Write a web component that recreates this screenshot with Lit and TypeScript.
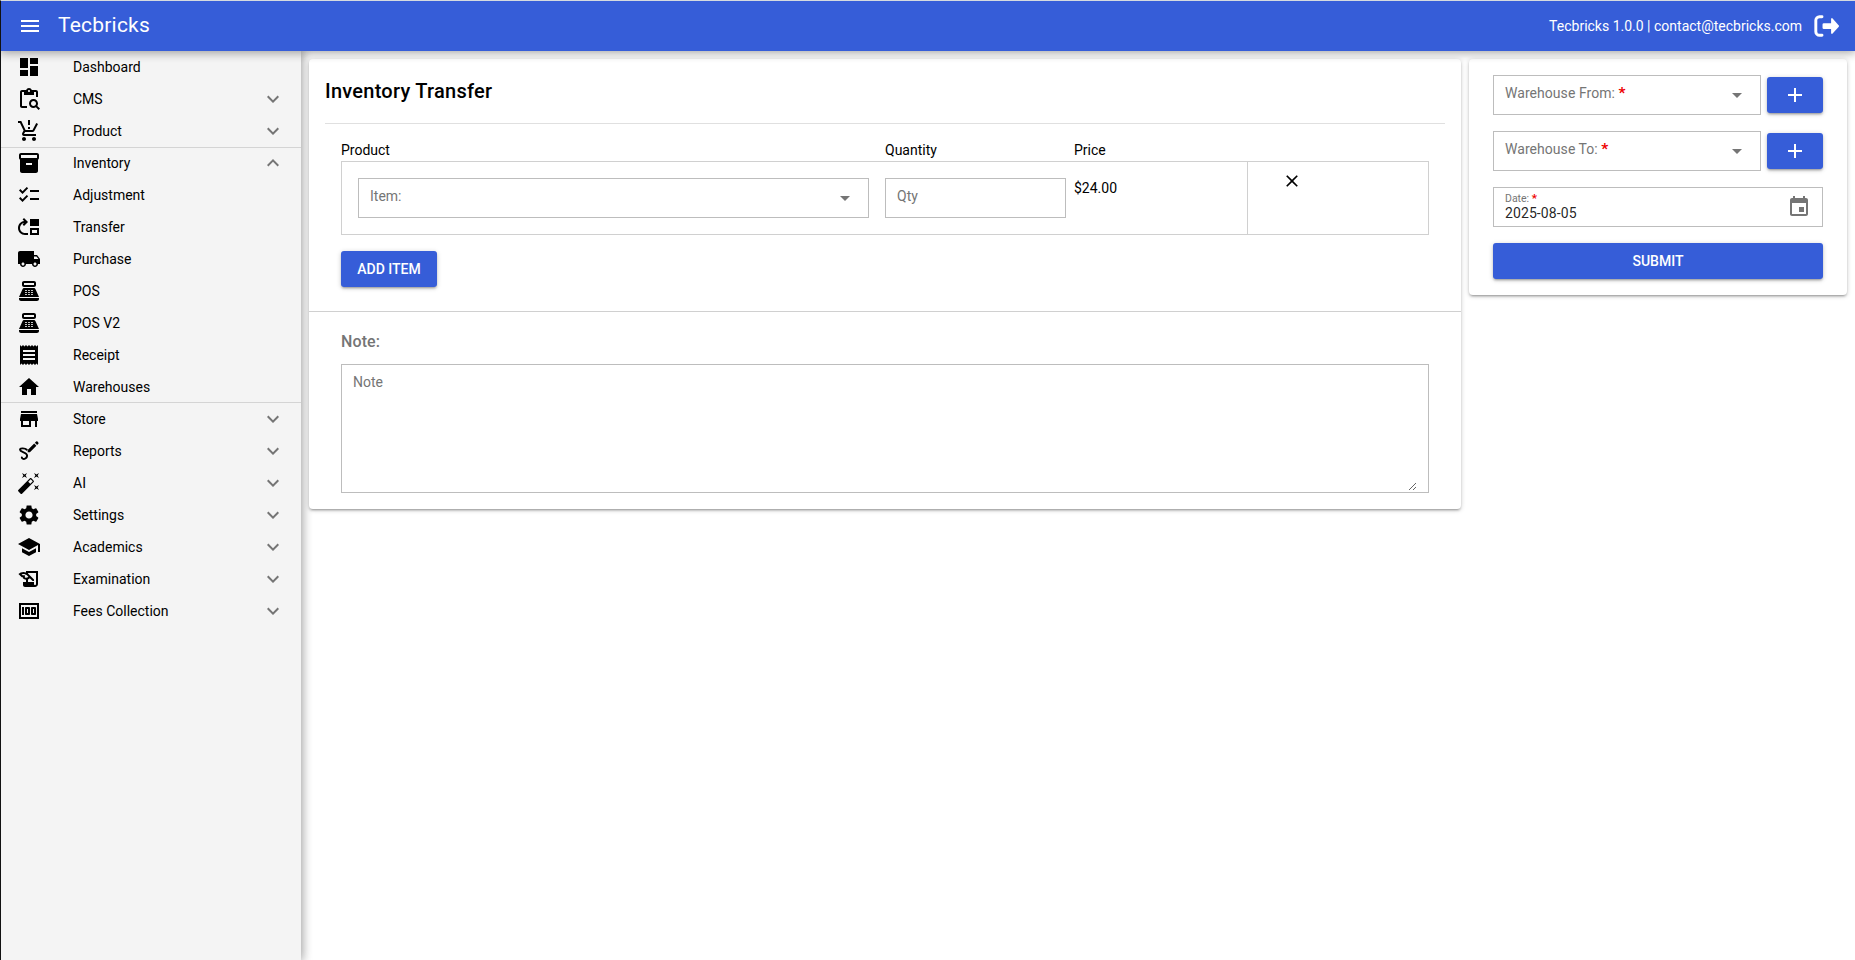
import { LitElement, html, css, svg, nothing } from "lit";
import { customElement, property } from "lit/decorators.js";

const ICONS: Record<string, string> = {
  dashboard: "M3 13h8V3H3v10zm0 8h8v-6H3v6zm10 0h8V11h-8v10zm0-18v6h8V3h-8z",
  cms: "M5 5h2v3h10V5h2v5h2V5c0-1.1-.9-2-2-2h-4.18C14.4 1.84 13.3 1 12 1s-2.4.84-2.82 2H5c-1.1 0-2 .9-2 2v14c0 1.1.9 2 2 2h5v-2H5V5zm7-2c.55 0 1 .45 1 1s-.45 1-1 1-1-.45-1-1 .45-1 1-1zM20.3 18.9c.4-.7.7-1.5.7-2.4 0-2.5-2-4.5-4.5-4.5S12 14 12 16.5s2 4.5 4.5 4.5c.9 0 1.7-.3 2.4-.7l2.7 2.7 1.4-1.4-2.7-2.7zm-3.8.1c-1.4 0-2.5-1.1-2.5-2.5s1.1-2.5 2.5-2.5 2.5 1.1 2.5 2.5-1.1 2.5-2.5 2.5z",
  cart: "M13 10h-2V8h2v2zm0-4h-2V1h2v5zM7 18c-1.1 0-1.99.9-1.99 2S5.9 22 7 22s2-.9 2-2-.9-2-2-2zm10 0c-1.1 0-1.99.9-1.99 2s.89 2 1.99 2 2-.9 2-2-.9-2-2-2zm-8.9-5h7.45c.75 0 1.41-.41 1.75-1.03L21 4.96 19.25 4l-3.7 7H8.53L4.27 2H1v2h2l3.6 7.59-1.35 2.44C4.52 15.37 5.48 17 7 17h12v-2H7l1.1-2z",
  inventory: "M20 2H4c-1 0-2 .9-2 2v3.01c0 .72.43 1.34 1 1.69V20c0 1.1 1.1 2 2 2h14c.9 0 2-.9 2-2V8.7c.57-.35 1-.97 1-1.69V4c0-1.1-1-2-2-2zm-5 12H9v-2h6v2zm5-7H4V4h16v3z",
  checklist: "M22 7h-9v2h9V7zm0 8h-9v2h9v-2zM5.54 11 2 7.46l1.41-1.41 2.12 2.12 4.24-4.24 1.41 1.41L5.54 11zm0 8L2 15.46l1.41-1.41 2.12 2.12 4.24-4.24 1.41 1.41L5.54 19z",
  transfer: "M3 13c0-2.45 1.76-4.47 4.08-4.91L5.59 9.59 7 11l4-4.01L7 3 5.59 4.41l1.58 1.58v.06C3.7 6.46 1 9.42 1 13c0 3.87 3.13 7 7 7h3v-2H8c-2.76 0-5-2.24-5-5zM13 13v7h9v-7h-9zm7 5h-5v-3h5v3zM13 4h9v7h-9z",
  truck: "M20 8h-3V4H3c-1.1 0-2 .9-2 2v11h2c0 1.66 1.34 3 3 3s3-1.34 3-3h6c0 1.66 1.34 3 3 3s3-1.34 3-3h2v-5l-3-4zM6 18.5c-.83 0-1.5-.67-1.5-1.5s.67-1.5 1.5-1.5 1.5.67 1.5 1.5-.67 1.5-1.5 1.5zm13.5-9l1.96 2.5H17V9.5h2.5zm-1.5 9c-.83 0-1.5-.67-1.5-1.5s.67-1.5 1.5-1.5 1.5.67 1.5 1.5-.67 1.5-1.5 1.5z",
  pos: "M17 2H7c-1.1 0-2 .9-2 2v2c0 1.1.9 2 2 2h10c1.1 0 2-.9 2-2V4c0-1.1-.9-2-2-2zm0 4H7V4h10v2zm3 16H4c-1.1 0-2-.9-2-2v-1h20v1c0 1.1-.9 2-2 2zm-1.47-11.81C18.21 9.47 17.49 9 16.7 9H7.3c-.79 0-1.51.47-1.83 1.19L2 18h20l-3.47-7.81zM9.5 16h-1c-.28 0-.5-.22-.5-.5s.22-.5.5-.5h1c.28 0 .5.22.5.5s-.22.5-.5.5zm0-2h-1c-.28 0-.5-.22-.5-.5s.22-.5.5-.5h1c.28 0 .5.22.5.5s-.22.5-.5.5zm0-2h-1c-.28 0-.5-.22-.5-.5s.22-.5.5-.5h1c.28 0 .5.22.5.5s-.22.5-.5.5zm3 4h-1c-.28 0-.5-.22-.5-.5s.22-.5.5-.5h1c.28 0 .5.22.5.5s-.22.5-.5.5zm0-2h-1c-.28 0-.5-.22-.5-.5s.22-.5.5-.5h1c.28 0 .5.22.5.5s-.22.5-.5.5zm0-2h-1c-.28 0-.5-.22-.5-.5s.22-.5.5-.5h1c.28 0 .5.22.5.5s-.22.5-.5.5zm3 4h-1c-.28 0-.5-.22-.5-.5s.22-.5.5-.5h1c.28 0 .5.22.5.5s-.22.5-.5.5zm0-2h-1c-.28 0-.5-.22-.5-.5s.22-.5.5-.5h1c.28 0 .5.22.5.5s-.22.5-.5.5zm0-2h-1c-.28 0-.5-.22-.5-.5s.22-.5.5-.5h1c.28 0 .5.22.5.5s-.22.5-.5.5z",
  receipt: "M18 17H6v-2h12v2zm0-4H6v-2h12v2zm0-4H6V7h12v2zM3 22l1.5-1.5L6 22l1.5-1.5L9 22l1.5-1.5L12 22l1.5-1.5L15 22l1.5-1.5L18 22l1.5-1.5L21 22V2l-1.5 1.5L18 2l-1.5 1.5L15 2l-1.5 1.5L12 2l-1.5 1.5L9 2 7.5 3.5 6 2 4.5 3.5 3 2v20z",
  home: "M10 20v-6h4v6h5v-8h3L12 3 2 12h3v8z",
  store: "M20 4H4v2h16V4zm1 10v-2l-1-5H4l-1 5v2h1v6h10v-6h4v6h2v-6h1zm-9 4H6v-4h6v4z",
  reports: "M20.500 2.600a1 1 0 0 0-1.400 0l-1.200 1.200 2.200 2.200 1.200-1.200a1 1 0 0 0 0-1.400zM17.200 4.500 10.700 11V13.200h2.200l6.500-6.500z",
  magic: "M7.5 5.6L10 7 8.6 4.5 10 2 7.5 3.4 5 2l1.4 2.5L5 7zm12 9.8L17 14l1.4 2.5L17 19l2.5-1.4L22 19l-1.4-2.5L22 14zM22 2l-2.5 1.4L17 2l1.4 2.5L17 7l2.5-1.4L22 7l-1.4-2.5zm-7.63 5.29c-.39-.39-1.02-.39-1.41 0L1.29 18.96c-.39.39-.39 1.02 0 1.41l2.34 2.34c.39.39 1.02.39 1.41 0L16.7 11.05c.39-.39.39-1.02 0-1.41l-2.33-2.35zm-1.03 5.49l-2.12-2.12 2.44-2.44 2.12 2.12-2.44 2.44z",
  settings: "M19.14 12.94c.04-.3.06-.61.06-.94 0-.32-.02-.64-.07-.94l2.03-1.58c.18-.14.23-.41.12-.61l-1.92-3.32c-.12-.22-.37-.29-.59-.22l-2.39.96c-.5-.38-1.03-.7-1.62-.94l-.36-2.54c-.04-.24-.24-.41-.48-.41h-3.84c-.24 0-.43.17-.47.41l-.36 2.54c-.59.24-1.13.57-1.62.94l-2.39-.96c-.22-.08-.47 0-.59.22L2.74 8.87c-.12.21-.08.47.12.61l2.03 1.58c-.05.3-.09.63-.09.94s.02.64.07.94l-2.03 1.58c-.18.14-.23.41-.12.61l1.92 3.32c.12.22.37.29.59.22l2.39-.96c.5.38 1.03.7 1.62.94l.36 2.54c.05.24.24.41.48.41h3.84c.24 0 .44-.17.47-.41l.36-2.54c.59-.24 1.13-.56 1.62-.94l2.39.96c.22.08.47 0 .59-.22l1.92-3.32c.12-.22.07-.47-.12-.61l-2.01-1.58zM12 15.6c-1.98 0-3.6-1.62-3.6-3.6s1.62-3.6 3.6-3.6 3.6 1.62 3.6 3.6-1.62 3.6-3.6 3.6z",
  school: "M5 13.18v4L12 21l7-3.82v-4L12 17l-7-3.82zM12 3L1 9l11 6 9-4.91V17h2V9L12 3z",
  exam: "M9 4v1.38c-.83-.33-1.72-.5-2.61-.5-1.79 0-3.58.68-4.95 2.05l3.33 3.33h1.11v1.11c.86.86 1.98 1.31 3.11 1.36V15H6v3c0 1.1.9 2 2 2h10c1.66 0 3-1.34 3-3V4H9zm-1.11 6.41V8.26H5.61L4.57 7.22a5.07 5.07 0 0 1 1.82-.34c1.34 0 2.59.52 3.54 1.46l1.41 1.41-.2.2c-.51.51-1.19.8-1.92.8-.47 0-.93-.12-1.33-.34zM19 17c0 .55-.45 1-1 1s-1-.45-1-1v-2h-6v-2.59c.57-.23 1.1-.57 1.56-1.03l.2-.2L15.59 14H17v-1.41l-6-5.97V6h8v11z",
  money: "M15 16h3c.55 0 1-.45 1-1V9c0-.55-.45-1-1-1h-3c-.55 0-1 .45-1 1v6c0 .55.45 1 1 1zm1-6h1v4h-1v-4zm-7 6h3c.55 0 1-.45 1-1V9c0-.55-.45-1-1-1H9c-.55 0-1 .45-1 1v6c0 .55.45 1 1 1zm1-6h1v4h-1v-4zM5 8h2v8H5zM2 4v16h20V4H2zm18 14H4V6h16v12z",
  more: "M16.59 8.59L12 13.17 7.41 8.59 6 10l6 6 6-6z",
  less: "M12 8l-6 6 1.41 1.41L12 10.83l4.59 4.58L18 14z",
  menu: "M3 18h18v-2H3v2zm0-5h18v-2H3v2zm0-7v2h18V6H3z",
  add: "M19 13h-6v6h-2v-6H5v-2h6V5h2v6h6v2z",
  close: "M19 6.41L17.59 5 12 10.59 6.41 5 5 6.41 10.59 12 5 17.59 6.41 19 12 13.41 17.59 19 19 17.59 13.41 12z",
  event: "M17 12h-5v5h5v-5zM16 1v2H8V1H6v2H5c-1.11 0-1.99.9-1.99 2L3 19c0 1.1.89 2 2 2h14c1.1 0 2-.9 2-2V5c0-1.1-.9-2-2-2h-1V1h-2zm3 18H5V8h14v11z",
  arrow: "M7 10l5 5 5-5z",
  logout: "M16.700 5.600V9.500H10A1.200 1.200 0 0 0 8.800 10.700v2.800A1.200 1.200 0 0 0 10 14.700H16.700V18.400a.8.8 0 0 0 1.400.6L23.600 13a1.300 1.300 0 0 0 0-1.800L18.100 5a.8.8 0 0 0-1.400.6z",
};

// Parts of an icon that are drawn as round-capped lines: path and line width.
const LINES: Record<string, [string, number]> = {
  reports: ["M9.800 10.700C8.200 9.200 3 8.600 3 10.800c0 2.300 7.100 2.500 7.100 5.800 0 3.600-5 4.500-5.300 1.800", 1.9],
  logout: ["M8.300 3.400H6A3.400 3.400 0 0 0 2.600 6.800V17.200A3.400 3.400 0 0 0 6 20.600H8.300", 2.7],
};

@customElement("md-icon")
export class MdIcon extends LitElement {
  static styles = css`
    :host { display: block; flex: none; width: 24px; height: 24px; }
    svg { display: block; width: 100%; height: 100%; fill: currentColor; }
    .line { fill: none; stroke: currentColor; stroke-linecap: round; }
  `;
  @property() name = "";
  render() {
    const line = LINES[this.name];
    return html`<svg viewBox="0 0 24 24">
      ${svg`<path d=${ICONS[this.name] ?? ""}></path>`}
      ${line ? svg`<path class="line" d=${line[0]} stroke-width=${line[1]}></path>` : nothing}
    </svg>`;
  }
}

interface Item { icon: string; label: string; open?: boolean; leaf?: boolean; }
const leaf = (icon: string, label: string): Item => ({ icon, label, leaf: true });
const node = (icon: string, label: string): Item => ({ icon, label });

const TOP: Item[] = [leaf("dashboard", "Dashboard"), node("cms", "CMS"), node("cart", "Product")];
const GROUP: Item[] = [
  { icon: "inventory", label: "Inventory", open: true },
  leaf("checklist", "Adjustment"), leaf("transfer", "Transfer"), leaf("truck", "Purchase"),
  leaf("pos", "POS"), leaf("pos", "POS V2"), leaf("receipt", "Receipt"), leaf("home", "Warehouses"),
];
const BOTTOM: Item[] = [
  node("store", "Store"), node("reports", "Reports"), node("magic", "AI"), node("settings", "Settings"),
  node("school", "Academics"), node("exam", "Examination"), node("money", "Fees Collection"),
];

@customElement("app-root")
export class AppRoot extends LitElement {
  static styles = css`
    :host {
      display: flex; flex-direction: column; box-sizing: border-box; height: 960px; overflow: hidden;
      border-left: 1px solid #111; border-top: 1px solid #d5dadf;
      background: #fff; color: #000;
      font: 14px/20px Roboto, sans-serif;
    }
    * { box-sizing: border-box; }
    header {
      display: flex; align-items: center; flex: none; height: 50px; padding: 0 16px 0 17px;
      color: #fff; background: #365dd8; position: relative; z-index: 2;
      box-shadow: 0 0 10px 2px rgba(0,0,0,.2), 0 0 10px rgba(0,0,0,.24);
    }
    .brand { margin: 0 auto 2px 16px; font-size: 21px; letter-spacing: .21px; }
    .logout { width: 26px; height: 26px; margin-left: 11px; }
    .body { display: flex; flex: 1; min-height: 0; }
    nav {
      flex: none; width: 300px; background: #f4f4f4;
      box-shadow: 0 0 10px 2px rgba(0,0,0,.2), 0 0 10px rgba(0,0,0,.24);
    }
    .group { box-shadow: inset 0 1px #d4d4d4, inset 0 -1px #d4d4d4; }
    .item { display: flex; align-items: center; height: 32px; padding: 0 16px; }
    .item md-icon { color: #000; }
    .item span { flex: 1; margin-left: 32px; }
    .item .chev { color: #757575; }
    main { display: flex; align-items: flex-start; gap: 8px; flex: 1; padding: 8px; }
    .card {
      background: #fff; border-radius: 4px; position: relative;
      box-shadow: 0 1px 5px rgba(0,0,0,.2), 0 2px 2px rgba(0,0,0,.14), 0 3px 1px -2px rgba(0,0,0,.12);
    }
    .form { flex: 1; }
    .side { width: 378px; flex: none; padding: 16px 24px; display: grid; gap: 16px; }
    .pad { padding: 0 16px; }
    h1 { margin: 0; height: 65px; padding-top: 20px; font: 500 20px/24px Roboto, sans-serif; letter-spacing: .25px; border-bottom: 1px solid #e0e0e0; }
    .lines { padding: 16px 16px 24px; }
    .heads { display: grid; grid-template-columns: 544px 189px 1fr; height: 21px; }
    .row { display: grid; grid-template-columns: 527px 205px 173px 1fr; height: 74px; border: 1px solid #d0d0d0; }
    .row > .field { margin: 16px 0 0 16px; }
    .row > .qty { width: 181px; }
    .price { padding-top: 16px; }
    .del { border-left: 1px solid #d0d0d0; padding: 9px 0 0 34px; }
    .del md-icon { width: 20px; height: 20px; }
    .field { display: flex; align-items: center; height: 40px; border: 1px solid #bdbdbd; padding: 0 11px; color: #757575; }
    .field .lab { flex: 1; padding-bottom: 4px; }
    .pair .lab { letter-spacing: .05px; }
    .req { color: #e00; font-weight: 700; font-size: 1.1em; line-height: 0; }
    button {
      display: flex; align-items: center; justify-content: center; height: 36px; padding: 0 16px; border: 0; border-radius: 3px;
      color: #fff; background: #365dd8; font: 500 14px/36px Roboto, sans-serif;
      box-shadow: 0 1px 5px rgba(0,0,0,.2), 0 2px 2px rgba(0,0,0,.14), 0 3px 1px -2px rgba(0,0,0,.12);
    }
    .lines button { margin-top: 16px; width: 96px; }
    .note { border-top: 1px solid #d0d0d0; padding: 20px 32px 16px; }
    h2 { margin: 0 0 12px; font: 500 16px/20px Roboto, sans-serif; letter-spacing: .1px; color: #757575; }
    .area { height: 129px; border: 1px solid #bdbdbd; padding: 7px 11px 1px; }
    textarea { display: block; width: 100%; height: 100%; border: 0; outline: 0; padding: 0; background: none; resize: vertical; font: 14px/20px Roboto, sans-serif; }
    textarea::placeholder { color: #757575; opacity: 1; }
    .pair { display: flex; align-items: center; gap: 6px; }
    .pair .field { width: 268px; }
    .pair button { width: 56px; }
    .date .lab { padding: 0 0 2px; display: flex; flex-direction: column; }
    .date small { font-size: 10.5px; line-height: 12px; margin-top: 2px; }
    .date b { font-weight: 400; color: rgba(0,0,0,.87); line-height: 16px; letter-spacing: .1px; }
  `;

  private item(i: Item) {
    return html`<div class="item">
      <md-icon name=${i.icon}></md-icon><span>${i.label}</span>
      ${i.leaf ? nothing : html`<md-icon class="chev" name=${i.open ? "less" : "more"}></md-icon>`}
    </div>`;
  }

  private warehouse(label: string) {
    return html`<div class="pair">
      <div class="field"><span class="lab">${label} <span class="req">*</span></span><md-icon name="arrow"></md-icon></div>
      <button><md-icon name="add"></md-icon></button>
    </div>`;
  }

  render() {
    return html`
      <header>
        <md-icon name="menu"></md-icon>
        <div class="brand">Tecbricks</div>
        <div>Tecbricks 1.0.0 | contact@tecbricks.com</div>
        <md-icon class="logout" name="logout"></md-icon>
      </header>
      <div class="body">
        <nav>
          ${TOP.map((i) => this.item(i))}
          <div class="group">${GROUP.map((i) => this.item(i))}</div>
          ${BOTTOM.map((i) => this.item(i))}
        </nav>
        <main>
          <section class="card form">
            <div class="pad">
              <h1>Inventory Transfer</h1>
              <div class="lines">
                <div class="heads"><span>Product</span><span>Quantity</span><span>Price</span></div>
                <div class="row">
                  <div class="field"><span class="lab">Item:</span><md-icon name="arrow"></md-icon></div>
                  <div class="field qty"><span class="lab">Qty</span></div>
                  <div class="price">$24.00</div>
                  <div class="del"><md-icon name="close"></md-icon></div>
                </div>
                <button>ADD ITEM</button>
              </div>
            </div>
            <div class="note">
              <h2>Note:</h2>
              <div class="area"><textarea placeholder="Note"></textarea></div>
            </div>
          </section>
          <aside class="card side">
            ${this.warehouse("Warehouse From:")}
            ${this.warehouse("Warehouse To:")}
            <div class="field date">
              <span class="lab"><small>Date: <span class="req">*</span></small><b>2025-08-05</b></span>
              <md-icon name="event"></md-icon>
            </div>
            <button>SUBMIT</button>
          </aside>
        </main>
      </div>
    `;
  }
}
